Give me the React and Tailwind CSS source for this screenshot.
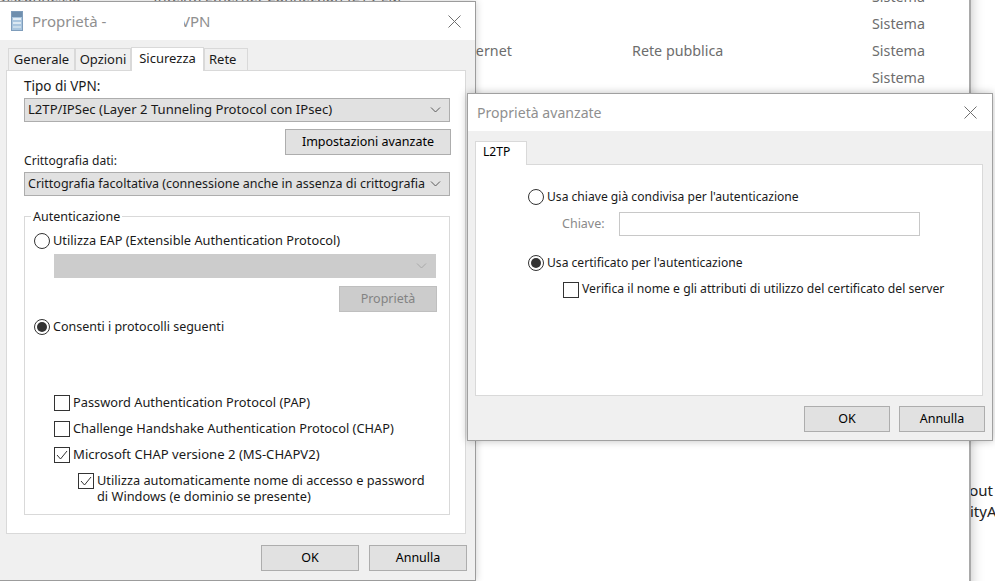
import React from "react";

const Btn = ({ children, className = "", disabled = false }) => (
   <div
      className={`flex items-center justify-center border ${
         disabled
            ? "bg-[#cccccc] border-[#bfbfbf] text-[#838383]"
            : "bg-[#e1e1e1] border-[#adadad] text-black"
      } ${className}`}
   >
      {children}
   </div>
);

const Chevron = ({ color = "#5a5a5a" }) => (
   <svg width="11" height="6" viewBox="0 0 11 6" fill="none">
      <path d="M1 .5 5.5 5 10 .5" stroke={color} strokeWidth="1" />
   </svg>
);

const Select = ({ children, className = "", disabled = false }) => (
   <div
      className={`h-6 flex items-center justify-between pl-[3px] pr-2 border whitespace-nowrap ${
         disabled ? "bg-[#cccccc] border-[#cccccc]" : "bg-[#e1e1e1] border-[#adadad]"
      } ${className}`}
   >
      <span>{children}</span>
      <Chevron color={disabled ? "#a8a8a8" : "#5a5a5a"} />
   </div>
);

const Radio = ({ checked = false, children, className = "" }) => (
   <div className={`flex items-center h-4 whitespace-nowrap ${className}`}>
      <span className="w-4 h-4 mr-[3px] shrink-0 rounded-full border border-[#333333] bg-white flex items-center justify-center">
         {checked && <span className="w-[10px] h-[10px] rounded-full bg-[#333333]" />}
      </span>
      {children}
   </div>
);

const Check = ({ checked = false, children, className = "" }) => (
   <div className={`flex items-start whitespace-nowrap ${className}`}>
      <span className="w-4 h-4 mt-px mr-[3px] shrink-0 border border-[#333333] bg-white flex items-center justify-center">
         {checked && (
            <svg width="12" height="10" viewBox="0 0 12 10" fill="none">
               <path d="M1 5l3.5 4L11 1" stroke="#333333" strokeWidth="1" />
            </svg>
         )}
      </span>
      <span className="leading-4">{children}</span>
   </div>
);

const CloseX = () => (
   <svg width="13" height="13" viewBox="0 0 13 13" fill="none">
      <path d="M.5.5l12 12M12.5.5l-12 12" stroke="#6f6f6f" strokeWidth="1" />
   </svg>
);

const TitleIcon = () => (
   <svg width="12" height="20" viewBox="0 0 12 20">
      <rect x="0" y="0" width="12" height="20" fill="#7f9dbb" />
      <rect x="1" y="1" width="10" height="18" fill="#a9c5de" />
      <rect x="1" y="1" width="10" height="5" fill="#6f8fae" />
      <rect x="2" y="7" width="8" height="2" fill="#e4eef6" />
      <rect x="2" y="11" width="8" height="2" fill="#dbe8f2" />
      <rect x="2" y="15" width="8" height="2" fill="#c9dcea" />
   </svg>
);

const Tab = ({ children, active = false, className = "" }) => (
   <div
      className={`flex items-center justify-center border border-[#d9d9d9] border-b-0 ${
         active ? "bg-white h-[24px] pb-[2px] relative z-10 -mb-px" : "bg-[#f0f0f0] h-[22px] pt-[1px]"
      } ${className}`}
   >
      {children}
   </div>
);

// the window behind the two dialogs
const BackWindow = () => (
   <div className="absolute -left-[20px] -top-[20px] w-[991px] h-[640px] bg-white border-r-2 border-[#a9a9a9] shadow-[0_0_12px_rgba(0,0,0,0.25)] text-[#6d6d6d] text-[14.3px]">
      <div className="flex flex-col items-start pl-[892px] pt-[7px] gap-[7px] leading-[20px]">
         <span>Sistema</span>
         <span>Sistema</span>
         <span>Sistema</span>
         <span>Sistema</span>
      </div>
      <span className="absolute left-[652px] top-[61px] leading-[20px]">Rete pubblica</span>
      <span className="absolute left-[477px] top-[61px] leading-[20px]">Internet</span>
      <span className="absolute left-[173px] top-[7px] leading-[20px] whitespace-nowrap">Intel(R) Ethernet Connection I219-LM</span>
      <span className="absolute left-[16px] top-[7px] leading-[20px] whitespace-nowrap">Disconnesso</span>
   </div>
);

const App = () => {
   return (
      <div
         className="relative w-[995px] h-[581px] overflow-hidden bg-white text-[12.5px] text-[#1a1a1a]"
         style={{ fontFamily: '"Noto Sans", "Open Sans", sans-serif' }}
      >
         <div className="absolute left-[960px] top-[480px] text-[15px] leading-[21px] text-[#222222] whitespace-nowrap">
            <div>bout</div>
            <div className="pl-[10px]">ityA</div>
         </div>
         <BackWindow />

         {/* Proprieta VPN */}
         <div className="absolute -left-px top-px w-[477px] h-[580px] bg-[#f0f0f0] border border-[#9c9c9c] flex flex-col shadow-[0_0_8px_rgba(0,0,0,0.2)]">
            <div className="h-[38px] shrink-0 bg-white flex items-center pl-[11px] pr-[14px]">
               <TitleIcon />
               <span className="ml-[9px] text-[15px] text-[#8f8f8f]">Proprietà -</span>
               <span className="ml-[78px] w-[26px] overflow-hidden flex justify-end text-[15px] text-[#8f8f8f]">VPN</span>
               <span className="ml-auto">
                  <CloseX />
               </span>
            </div>
            <div className="flex items-end pl-[8px] pt-[8px] h-[30px] text-[13px]">
               <Tab className="w-[67px]">Generale</Tab>
               <Tab className="w-[56px]">Opzioni</Tab>
               <Tab active className="w-[73px]">Sicurezza</Tab>
               <Tab className="w-[44px] !justify-start pl-[4px]">Rete</Tab>
            </div>
            <div className="mx-[6px] w-[460px] h-[464px] bg-white border border-[#d9d9d9] pl-[17px] pr-[14px] flex flex-col">
               <div className="mt-[7px] h-[17px] leading-[17px] text-[13.5px]">Tipo di VPN:</div>
               <Select className="mt-[3px] w-[426px] text-[13.1px]">L2TP/IPSec (Layer 2 Tunneling Protocol con IPsec)</Select>
               <Btn className="mt-[7px] ml-[261px] w-[166px] h-[26px]">Impostazioni avanzate</Btn>
               <div className="mt-[-3px] h-[17px] leading-[17px] text-[12.1px]">Crittografia dati:</div>
               <Select className="mt-[3px] w-[426px]">Crittografia facoltativa (connessione anche in assenza di crittografia</Select>

               <div className="relative mt-[20px] w-[426px] h-[299px] border border-[#d9d9d9] pl-[9px] flex flex-col text-[12.8px]">
                  <span className="absolute left-[6px] -top-[9px] bg-white px-[2px] leading-[17px] text-[12.5px]">Autenticazione</span>
                  <Radio className="mt-[16px]">Utilizza EAP (Extensible Authentication Protocol)</Radio>
                  <Select disabled className="mt-[5px] ml-[20px] w-[382px]" />
                  <Btn disabled className="mt-[8px] ml-[305px] w-[98px] h-[26px] text-[12.5px]">Proprietà</Btn>
                  <Radio checked className="mt-[7px] text-[12.5px]">Consenti i protocolli seguenti</Radio>
                  <Check className="mt-[59px] ml-[20px]">Password Authentication Protocol (PAP)</Check>
                  <Check className="mt-[9px] ml-[20px]">Challenge Handshake Authentication Protocol (CHAP)</Check>
                  <Check checked className="mt-[9px] ml-[20px] text-[13.1px]">Microsoft CHAP versione 2 (MS-CHAPV2)</Check>
                  <Check checked className="mt-[9px] ml-[44px]">
                     Utilizza automaticamente nome di accesso e password
                     <br />
                     di Windows (e dominio se presente)
                  </Check>
               </div>
            </div>
            <div className="flex justify-end gap-[10px] pr-[8px] mt-[11px]">
               <Btn className="w-[98px] h-[26px]">OK</Btn>
               <Btn className="w-[98px] h-[26px]">Annulla</Btn>
            </div>
         </div>

         {/* Proprieta avanzate */}
         <div className="absolute left-[467px] top-[93px] w-[526px] h-[348px] bg-[#f0f0f0] border border-[#a0a0a0] flex flex-col shadow-[0_0_8px_rgba(0,0,0,0.25)] text-[12.1px]">
            <div className="h-[37px] shrink-0 bg-white flex items-center pl-[9px] pr-[15px]">
               <span className="text-[14.1px] text-[#8f8f8f]">Proprietà avanzate</span>
               <span className="ml-auto">
                  <CloseX />
               </span>
            </div>
            <div className="flex items-end pl-[7px] pt-[8px] h-[33px]">
               <Tab active className="w-[52px] !justify-start pl-[7px] text-black">L2TP</Tab>
            </div>
            <div className="mx-[7px] w-[508px] h-[232px] bg-white border border-[#d9d9d9] pl-[52px] flex flex-col">
               <Radio className="mt-[24px]">Usa chiave già condivisa per l'autenticazione</Radio>
               <div className="mt-[7px] flex items-center pl-[34px]">
                  <span className="w-[57px] text-[#8a8a8a] text-[12.5px]">Chiave:</span>
                  <div className="w-[301px] h-6 border border-[#c8c8c8]" />
               </div>
               <Radio checked className="mt-[19px]">Usa certificato per l'autenticazione</Radio>
               <Check className="mt-[10px] ml-[35px] text-[12.2px]">Verifica il nome e gli attributi di utilizzo del certificato del server</Check>
            </div>
            <div className="flex justify-end gap-[9px] pr-[7px] mt-[10px] text-[12.5px]">
               <Btn className="w-[86px] h-[26px]">OK</Btn>
               <Btn className="w-[86px] h-[26px]">Annulla</Btn>
            </div>
         </div>
      </div>
   );
};

export default App;
